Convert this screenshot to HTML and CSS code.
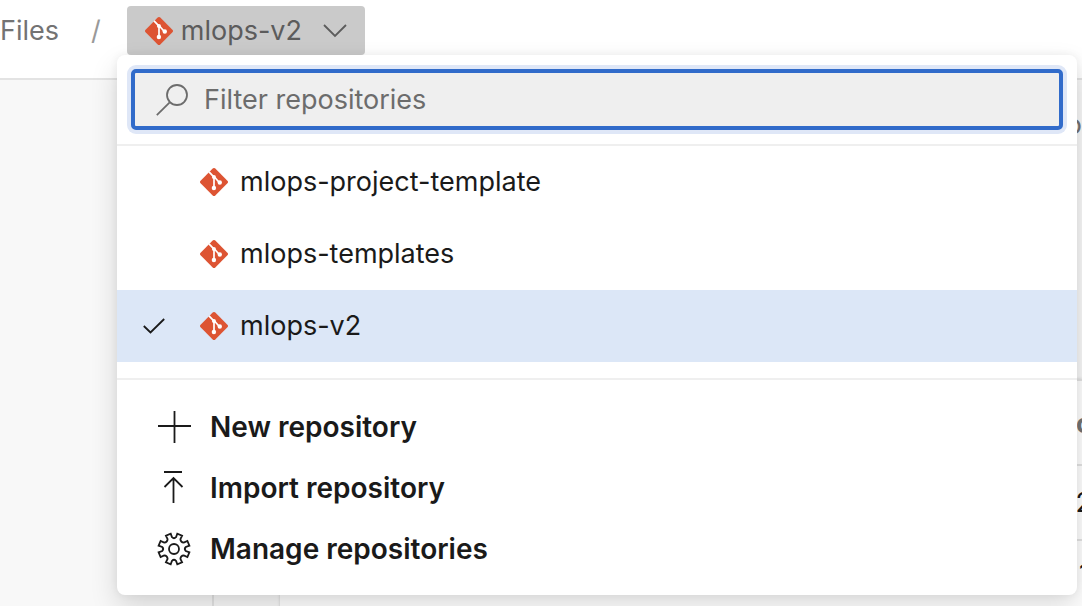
FILE: index.html
```html
<!DOCTYPE html>
<html lang="en">
<head>
<meta charset="utf-8">
<title>Files</title>
<link rel="stylesheet" href="styles.css">
</head>
<body>
<svg class="sprite" aria-hidden="true">
  <symbol id="git" viewBox="0 0 28 28">
    <path d="M12.7.6a1.9 1.9 0 0 1 2.6 0l12.1 12.1a1.9 1.9 0 0 1 0 2.6L15.3 27.4a1.9 1.9 0 0 1-2.6 0L.6 15.3a1.9 1.9 0 0 1 0-2.6z" fill="#dd5433"/>
    <path d="M9 3.8l4.8 5M14 9v11M14.5 9l5.2 6" fill="none" stroke="#fff" stroke-width="1.7"/>
    <circle cx="13.9" cy="8.9" r="2" fill="#fff"/>
    <circle cx="13.9" cy="20" r="2.2" fill="#fff"/>
    <circle cx="19.8" cy="14.5" r="2.2" fill="#fff"/>
  </symbol>
</svg>
<div class="page">
  <header class="topbar">
    <a class="crumb" href="#">Files</a>
    <span class="slash">/</span>
    <button class="picker" type="button" aria-expanded="true">
      <svg class="git"><use href="#git"/></svg>
      <span>mlops-v2</span>
      <svg class="chevron" viewBox="0 0 24 14"><path d="M1 1l11 11L23 1"/></svg>
    </button>
  </header>
  <main class="workspace">
    <aside class="sidebar"></aside>
    <section class="content">
      <div class="heading">o</div>
      <table class="files">
        <thead><tr><th>c</th></tr></thead>
        <tbody><tr><td>2</td></tr><tr><td>1</td></tr></tbody>
      </table>
    </section>
  </main>
  <div class="menu">
    <div class="search">
      <label class="searchbox">
        <svg class="icon" viewBox="0 0 32 32"><circle cx="21" cy="11" r="10"/><path d="M13.7 18.3L.8 31.2"/></svg>
        <input type="text" placeholder="Filter repositories" aria-label="Filter repositories">
      </label>
    </div>
    <div class="repos">
      <button class="repo" type="button"><span class="mark"></span><svg class="git"><use href="#git"/></svg>mlops-project-template</button>
      <button class="repo" type="button"><span class="mark"></span><svg class="git"><use href="#git"/></svg>mlops-templates</button>
      <button class="repo selected" type="button"><span class="mark"><svg class="check" viewBox="0 0 22 16"><path d="M.8 8L7.5 14.5L21.2 1"/></svg></span><svg class="git"><use href="#git"/></svg>mlops-v2</button>
    </div>
    <div class="actions">
      <button class="action" type="button"><svg class="icon" viewBox="0 0 32 32"><path d="M16.5 0v32M0 15h33"/></svg>New repository</button>
      <button class="action" type="button"><svg class="icon" viewBox="0 0 32 32"><path d="M6 0h18M15.5 31V6M6.5 15l9-9 9 9"/></svg>Import repository</button>
      <button class="action" type="button"><svg class="icon" viewBox="0 0 32 32"><path d="M12.7 .6L14 4.2Q16 6.2 18 4.2L19.3 .6L24.1 2.6L22.4 6.2Q22.6 9.4 25.8 9.6L29.4 7.9L31.4 12.7L27.8 14Q25.8 16 27.8 18L31.4 19.3L29.4 24.1L25.8 22.4Q22.6 22.6 22.4 25.8L24.1 29.4L19.3 31.4L18 27.8Q16 25.8 14 27.8L12.7 31.4L7.9 29.4L9.6 25.8Q9.4 22.6 6.2 22.4L2.6 24.1L.6 19.3L4.2 18Q6.2 16 4.2 14L.6 12.7L2.6 7.9L6.2 9.6Q9.4 9.4 9.6 6.2L7.9 2.6z"/><circle cx="16" cy="16" r="5"/></svg>Manage repositories</button>
    </div>
  </div>
</div>
</body>
</html>
```
FILE: styles.css
```css
* { box-sizing: border-box; }

body {
  margin: 0;
  font: 27px/32px Inter, "Liberation Sans", sans-serif;
  color: #1a1a1a;
}

button, input {
  font: inherit;
  color: inherit;
  border: 0;
  background: none;
  padding: 0;
  margin: 0;
}

.sprite { position: absolute; width: 0; height: 0; }

.page {
  position: relative;
  display: flex;
  flex-direction: column;
  min-height: 100vh;
  overflow: hidden;
}

.topbar {
  display: flex;
  align-items: center;
  height: 80px;
  padding-bottom: 17px;
  border-bottom: 2px solid #e3e3e3;
}

.crumb { color: #737373; text-decoration: none; }
.slash { margin: 0 26px 0 32px; color: #999; }

.picker {
  display: flex;
  align-items: center;
  gap: 8px;
  height: 49px;
  padding: 0 18px;
  border-radius: 4px;
  background: #cacaca;
  color: #5c5c5c;
}

.git { width: 28px; height: 28px; flex: none; }

.chevron {
  width: 24px;
  height: 14px;
  margin-left: 13px;
  fill: none;
  stroke: #5c5c5c;
  stroke-width: 1.8;
}

.workspace { display: flex; flex: 1; background: #f8f8f8; }
.sidebar { width: 214px; border-right: 2px solid #e3e3e3; }

.content {
  flex: 1;
  display: flex;
  flex-direction: column;
  padding-left: 66px;
}

.heading { padding-top: 29px; height: 299px; text-align: right; color: #737373; }

.files {
  width: 100%;
  flex: 1;
  border-spacing: 0;
  background: #fff;
  border-top: 2px solid #e3e3e3;
  box-shadow: 0 0 3px #ccc;
}

.files th, .files td {
  display: flex;
  justify-content: flex-end;
  height: 75px;
  padding: 21px 0;
  margin-right: -10px;
  border-bottom: 2px solid #e3e3e3;
}

.files th { height: 85px; padding-top: 27px; color: #737373; }
.files tr:last-child td { margin-right: -8px; padding-top: 17px; border-bottom: 0; }

.menu {
  position: absolute;
  top: 55px;
  left: 117px;
  right: 5px;
  border-radius: 8px;
  background: #fff;
  box-shadow: 0 12px 28px #00000024, 0 0 8px #0000000f;
}

.search { padding: 14px; border-bottom: 2px solid #efefef; }

.searchbox {
  display: flex;
  align-items: center;
  gap: 16px;
  height: 61px;
  padding: 0 21px;
  border: 4px solid #316bca;
  border-radius: 5px;
  background: #efefef;
  box-shadow: 0 0 0 4px #dfe7f7;
  color: #6c6c6c;
}

.searchbox input { flex: 1; min-width: 0; outline: none; }
.searchbox input::placeholder { color: #6c6c6c; opacity: 1; }

.icon {
  width: 32px;
  height: 32px;
  flex: none;
  overflow: visible;
  fill: none;
  stroke: currentColor;
  stroke-width: 1.8;
}

.repos { padding-bottom: 16px; border-bottom: 2px solid #efefef; }

.repo {
  display: flex;
  align-items: center;
  width: 100%;
  height: 72px;
  padding-left: 26px;
}

.repo .git { margin-right: 12px; }
.selected { background: #dce7f7; }
.mark { display: flex; width: 57px; }

.check {
  width: 22px;
  height: 16px;
  fill: none;
  stroke: #1a1a1a;
  stroke-width: 1.8;
}

.actions { padding: 16px 0; }

.action {
  display: flex;
  align-items: center;
  gap: 20px;
  width: 100%;
  height: 61px;
  padding-left: 41px;
  font-size: 28px;
  font-weight: 600;
}
```
